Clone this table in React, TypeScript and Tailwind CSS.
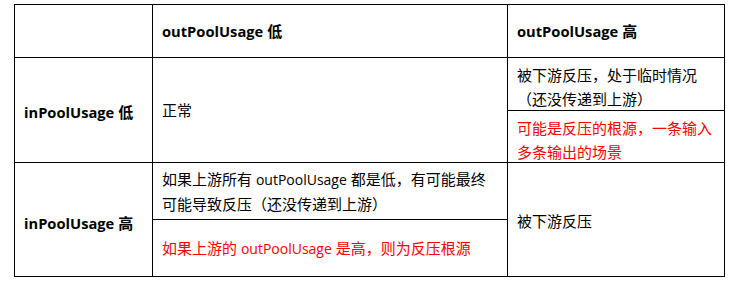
import React from 'react';

const font = "font-['Open_Sans','Noto_Sans_CJK_SC',sans-serif]";

const Cell = ({ className = '', children }: { className?: string; children?: React.ReactNode }) => (
  <div className={`flex items-center border-r border-b border-black pl-[9px] pr-1 text-[15px] leading-[24px] ${className}`}>
    {children}
  </div>
);

// latin words sit at a slightly smaller size than the CJK text
const L = ({ children }: { children: React.ReactNode }) => <span className="text-[14px]">{children}</span>;
const B = ({ children }: { children: React.ReactNode }) => <span className="text-[14.7px]">{children}</span>;

export default function App() {
  return (
    <div className={`min-h-screen bg-white pt-[4px] pl-[14px] text-black ${font}`}>
      <div className="grid w-[711px] grid-cols-[138px_355px_217px] grid-rows-[53px_53px_52px_57px_57px] border-l border-t border-black">
        {/* header */}
        <Cell />
        <Cell className="font-bold">
          <span><B>outPoolUsage</B> 低</span>
        </Cell>
        <Cell className="font-bold">
          <span><B>outPoolUsage</B> 高</span>
        </Cell>

        {/* inPoolUsage 低 */}
        <Cell className="row-span-2 pt-[4px] font-bold">
          <span><B>inPoolUsage</B> 低</span>
        </Cell>
        <Cell className="row-span-2">正常</Cell>
        <Cell className="pt-[5px]">
          <span>
            被下游反压，处于临时情况
            <br />
            （还没传递到上游）
          </span>
        </Cell>
        <Cell className="pt-[6px] text-[#ff0000]">
          <span>
            可能是反压的根源，一条输入
            <br />
            多条输出的场景
          </span>
        </Cell>

        {/* inPoolUsage 高 */}
        <Cell className="row-span-2 pt-[6px] font-bold">
          <span><B>inPoolUsage</B> 高</span>
        </Cell>
        <Cell>
          <span>
            如果上游所有 <L>outPoolUsage</L> 都是低，有可能最终
            <br />
            可能导致反压（还没传递到上游）
          </span>
        </Cell>
        <Cell className="row-span-2 pt-[3px]">被下游反压</Cell>
        <Cell className="text-[#ff0000]">
          <span>如果上游的 <L>outPoolUsage</L> 是高，则为反压根源</span>
        </Cell>
      </div>
    </div>
  );
}
